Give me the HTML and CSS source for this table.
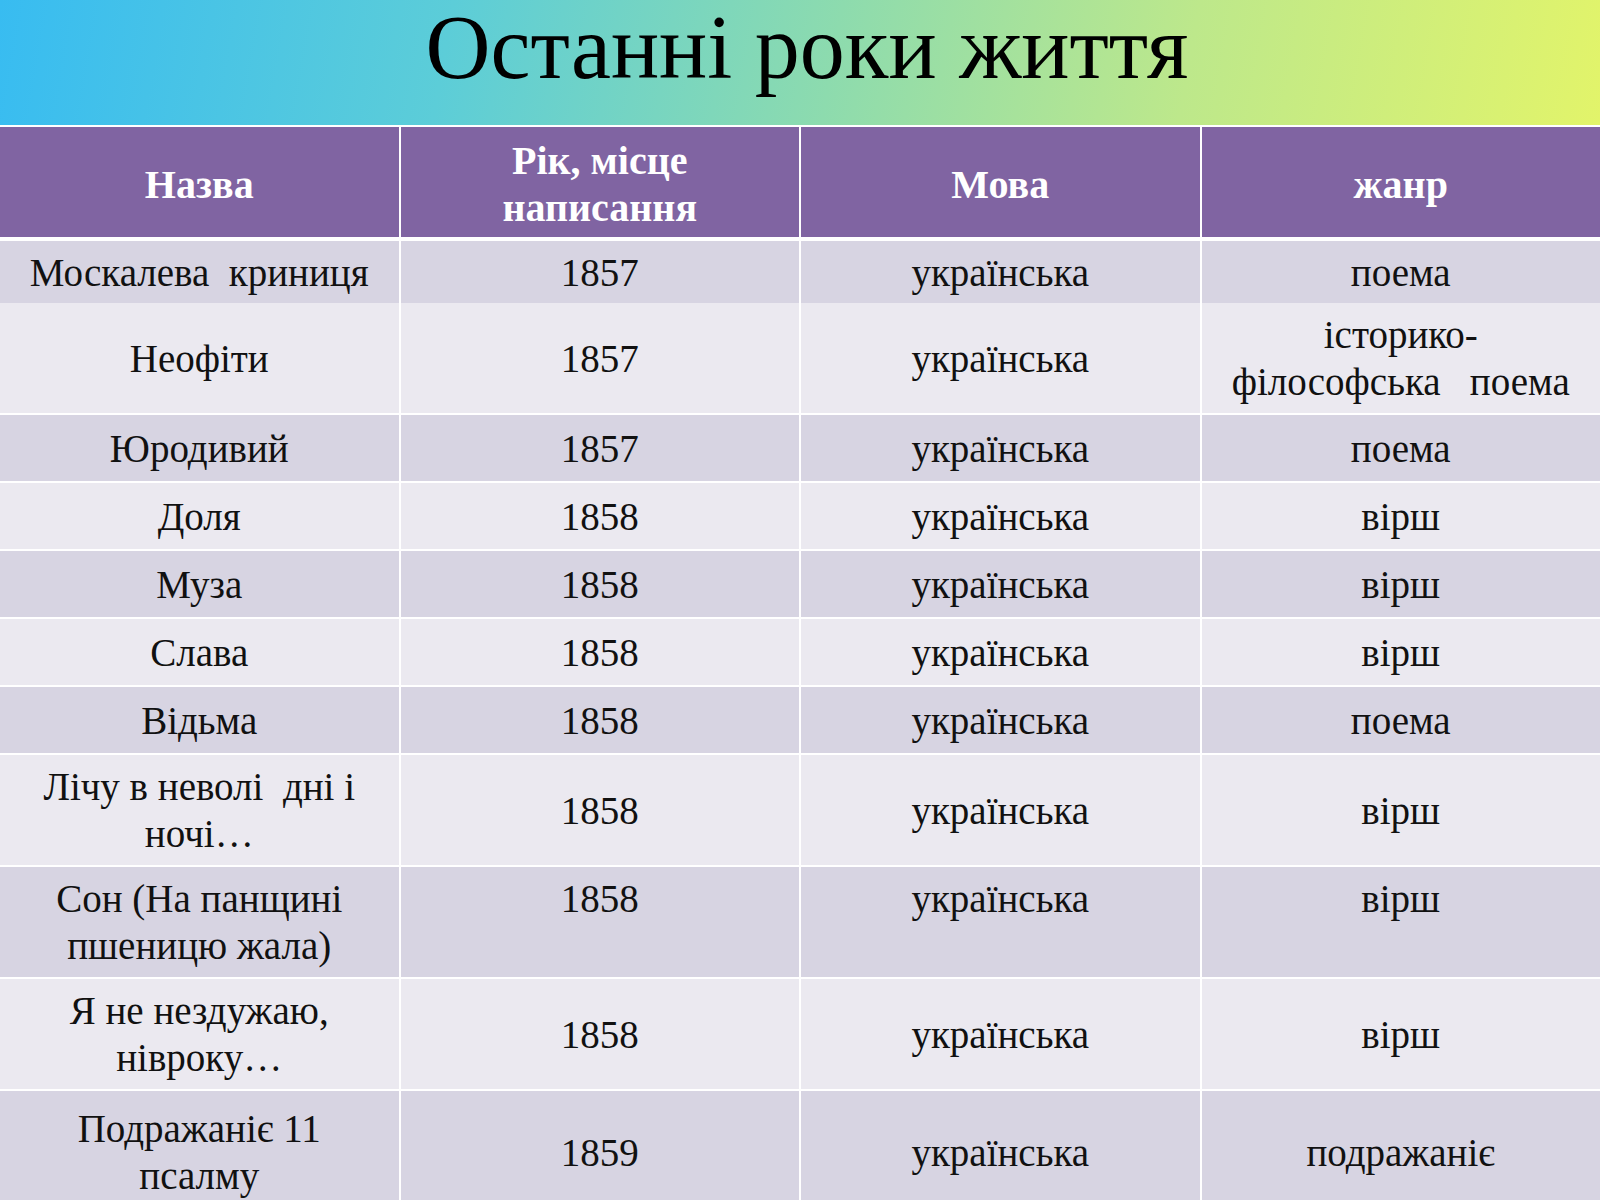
FILE: index.html
```html
<!DOCTYPE html>
<html lang="uk">
<head>
<meta charset="utf-8">
<title>Останні роки життя</title>
<link rel="stylesheet" href="styles.css">
</head>
<body>
<div class="slide">
  <header class="title-band">
    <h1 class="title">Останні роки життя</h1>
  </header>
  <div class="table">
    <div class="row head">
      <div class="cell"><span class="txt">Назва</span></div>
      <div class="cell"><span class="txt">Рік, місце<br>написання</span></div>
      <div class="cell"><span class="txt">Мова</span></div>
      <div class="cell"><span class="txt">жанр</span></div>
    </div>
    <div class="row band r-short">
      <div class="cell"><span class="txt">Москалева  криниця</span></div>
      <div class="cell"><span class="txt">1857</span></div>
      <div class="cell"><span class="txt">українська</span></div>
      <div class="cell"><span class="txt">поема</span></div>
    </div>
    <div class="row plain r-tall">
      <div class="cell"><span class="txt">Неофіти</span></div>
      <div class="cell"><span class="txt">1857</span></div>
      <div class="cell"><span class="txt">українська</span></div>
      <div class="cell"><span class="txt">історико-<br>філософська   поема</span></div>
    </div>
    <div class="row band r-one">
      <div class="cell"><span class="txt">Юродивий</span></div>
      <div class="cell"><span class="txt">1857</span></div>
      <div class="cell"><span class="txt">українська</span></div>
      <div class="cell"><span class="txt">поема</span></div>
    </div>
    <div class="row plain r-one">
      <div class="cell"><span class="txt">Доля</span></div>
      <div class="cell"><span class="txt">1858</span></div>
      <div class="cell"><span class="txt">українська</span></div>
      <div class="cell"><span class="txt">вірш</span></div>
    </div>
    <div class="row band r-one">
      <div class="cell"><span class="txt">Муза</span></div>
      <div class="cell"><span class="txt">1858</span></div>
      <div class="cell"><span class="txt">українська</span></div>
      <div class="cell"><span class="txt">вірш</span></div>
    </div>
    <div class="row plain r-one">
      <div class="cell"><span class="txt">Слава</span></div>
      <div class="cell"><span class="txt">1858</span></div>
      <div class="cell"><span class="txt">українська</span></div>
      <div class="cell"><span class="txt">вірш</span></div>
    </div>
    <div class="row band r-one">
      <div class="cell"><span class="txt">Відьма</span></div>
      <div class="cell"><span class="txt">1858</span></div>
      <div class="cell"><span class="txt">українська</span></div>
      <div class="cell"><span class="txt">поема</span></div>
    </div>
    <div class="row plain r-tall">
      <div class="cell"><span class="txt">Лічу в неволі  дні і<br>ночі…</span></div>
      <div class="cell"><span class="txt">1858</span></div>
      <div class="cell"><span class="txt">українська</span></div>
      <div class="cell"><span class="txt">вірш</span></div>
    </div>
    <div class="row band r-tall top">
      <div class="cell"><span class="txt">Сон (На панщині<br>пшеницю жала)</span></div>
      <div class="cell"><span class="txt">1858</span></div>
      <div class="cell"><span class="txt">українська</span></div>
      <div class="cell"><span class="txt">вірш</span></div>
    </div>
    <div class="row plain r-tall">
      <div class="cell"><span class="txt">Я не нездужаю,<br>нівроку…</span></div>
      <div class="cell"><span class="txt">1858</span></div>
      <div class="cell"><span class="txt">українська</span></div>
      <div class="cell"><span class="txt">вірш</span></div>
    </div>
    <div class="row band r-last">
      <div class="cell"><span class="txt">Подражаніє 11<br>псалму</span></div>
      <div class="cell"><span class="txt">1859</span></div>
      <div class="cell"><span class="txt">українська</span></div>
      <div class="cell"><span class="txt">подражаніє</span></div>
    </div>
  </div>
</div>
</body>
</html>
```

FILE: styles.css
```css
html, body {
  margin: 0;
  padding: 0;
  background: #ffffff;
}

body {
  width: 1600px;
  height: 1200px;
  overflow: hidden;
  font-family: "Liberation Serif", "Times New Roman", serif;
  color: #111111;
}

.slide {
  width: 1600px;
  height: 1200px;
  display: flex;
  flex-direction: column;
}

.title-band {
  height: 125px;
  flex: 0 0 125px;
  box-sizing: border-box;
  padding-top: 3px;
  background: linear-gradient(100deg, #38bcf1 0%, #5ccdd8 28%, #8ddbae 52%, #bde88b 74%, #e2f46a 100%);
  display: flex;
  align-items: flex-start;
  justify-content: center;
}

.title {
  margin: 0;
  font-family: "Liberation Serif", "Times New Roman", serif;
  font-weight: normal;
  font-size: 90px;
  line-height: 90px;
  color: #000000;
  padding-left: 14px;
}

.table {
  display: flex;
  flex-direction: column;
  padding-top: 2px;
}

.row {
  display: grid;
  grid-template-columns: repeat(4, 1fr);
  column-gap: 2px;
  margin-top: 2px;
}

.row.head {
  margin-top: 0;
  height: 107px;
  margin-bottom: 5px;
}

.cell {
  display: flex;
  align-items: center;
  justify-content: center;
  text-align: center;
  padding: 8px 10px;
  box-sizing: border-box;
  font-size: 39px;
  line-height: 47px;
  white-space: pre-wrap;
}

.head .cell {
  background: #8064a2;
  color: #ffffff;
  font-weight: bold;
  font-size: 40px;
  padding-top: 10px;
  padding-bottom: 6px;
}

.band .cell {
  background: #d7d4e2;
}

.plain .cell {
  background: #ebe9f0;
}

.top .cell {
  align-items: flex-start;
}

.r-short { height: 60px; }
.r-one { height: 66px; }
.r-tall { height: 110px; }
.r-last { height: 122px; }

.txt {
  display: inline-block;
}
```
